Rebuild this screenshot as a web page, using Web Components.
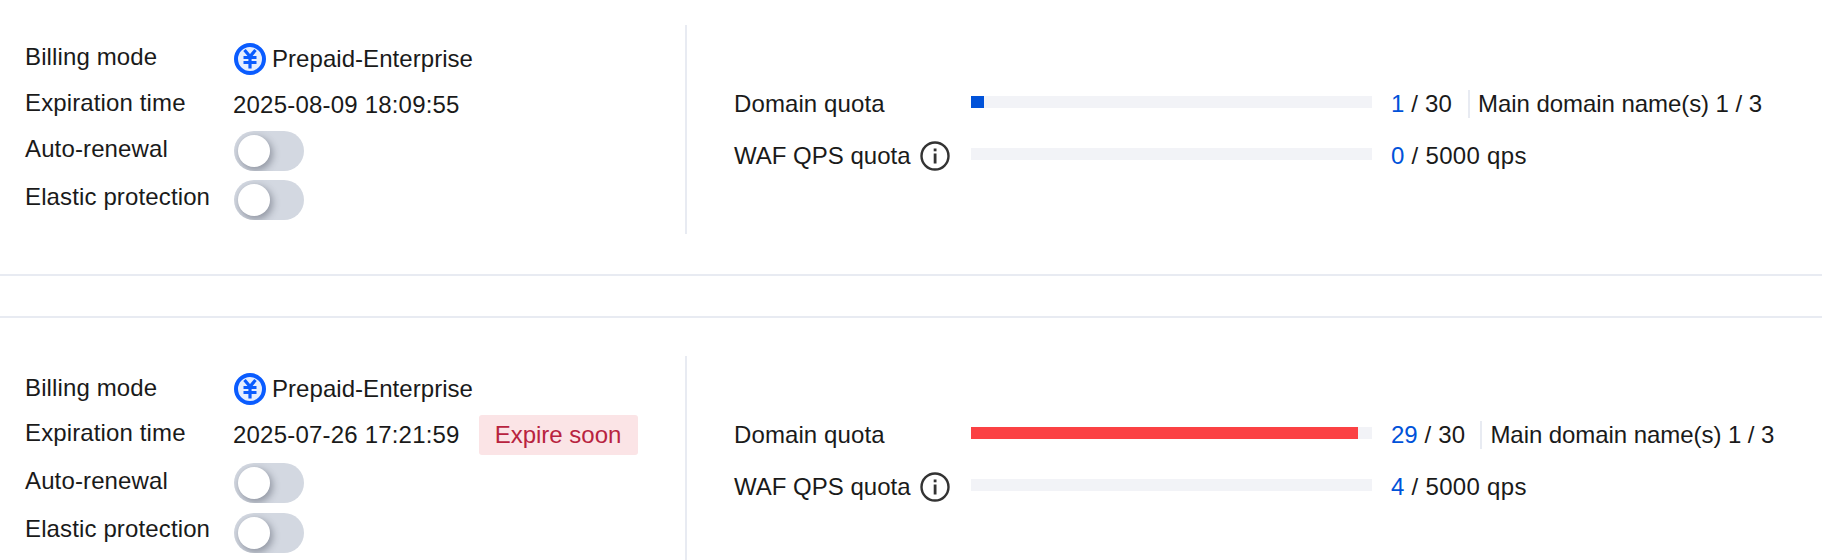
<!DOCTYPE html>
<html><head><meta charset="utf-8"><style>
html,body{margin:0;padding:0;background:#fff}
body{font:24px "Liberation Sans",Arial,sans-serif;color:#1a1a1a;width:1822px;height:560px;overflow:hidden}
billing-card[second]{margin-top:40px}
</style></head><body>
<billing-card date="2025-08-09 18:09:55" used="1" fill="13" wafused="0"></billing-card>
<billing-card second soon date="2025-07-26 17:21:59" used="29" fill="387" color="#fb4144" wafused="4"></billing-card>
<script>
class YenIcon extends HTMLElement{constructor(){super();this.attachShadow({mode:'open'}).innerHTML=`<style>:host{display:inline-flex;width:32px;height:32px;flex:none}svg{display:block}</style>
<svg width="32" height="32" viewBox="0 0 32 32"><circle cx="16" cy="16" r="14" fill="#e5eeff" stroke="#0a5cff" stroke-width="4"/>
<path d="M10.5 7 16 13.5 21.5 7M9.5 14.5H22.5M9.5 19.5H22.5M16 13.5V25.5" fill="none" stroke="#0a5cff" stroke-width="3.2"/></svg>`}}
customElements.define('yen-icon',YenIcon);
class InfoIcon extends HTMLElement{constructor(){super();this.attachShadow({mode:'open'}).innerHTML=`<style>:host{display:inline-flex;width:30px;height:30px;flex:none}svg{display:block}</style>
<svg width="30" height="30" viewBox="0 0 30 30"><circle cx="15" cy="15" r="13.5" fill="none" stroke="#333" stroke-width="2.4"/><rect x="13.7" y="7.5" width="2.8" height="2.8" fill="#333"/><rect x="13.7" y="12.5" width="2.8" height="10" fill="#333"/></svg>`}}
customElements.define('info-icon',InfoIcon);
class ToggleSwitch extends HTMLElement{constructor(){super();this.attachShadow({mode:'open'}).innerHTML=`<style>:host{display:block;width:70px;height:40px;border-radius:20px;background:#d3d8e1;overflow:hidden;padding:4px;box-sizing:border-box}
.k{width:32px;height:32px;border-radius:50%;background:#fff;box-shadow:2px 3px 7px 1px rgba(50,55,70,.38)}</style><div class="k"></div>`}}
customElements.define('toggle-switch',ToggleSwitch);
class InfoRow extends HTMLElement{constructor(){super();this.attachShadow({mode:'open'}).innerHTML=`<style>:host{display:flex;align-items:center;margin-top:var(--mt,0)}
.l{width:208px;flex:none;padding-bottom:var(--lift,4px);letter-spacing:.13px;white-space:nowrap;margin-left:-1px;margin-right:1px}
.v{display:flex;align-items:center;white-space:nowrap}</style><div class="l"><slot name="label"></slot></div><div class="v"><slot></slot></div>`}}
customElements.define('info-row',InfoRow);
class ExpireBadge extends HTMLElement{constructor(){super();this.attachShadow({mode:'open'}).innerHTML=`<style>:host{display:block;height:40px;line-height:40px;padding:0 17px 0 16px;background:#fbe4e6;color:#b8233f;border-radius:3px;margin-left:19px;white-space:nowrap}</style><slot></slot>`}}
customElements.define('expire-badge',ExpireBadge);
class QuotaRow extends HTMLElement{constructor(){super();this.attachShadow({mode:'open'}).innerHTML=`<style>:host{display:grid;grid-template-columns:237px 401px auto;align-items:center;margin-top:var(--mt,0);height:var(--h)}
.l{display:flex;align-items:center;white-space:nowrap;letter-spacing:var(--lls,.1px);padding-top:3px;margin-bottom:-1px}
.t{height:12px;background:#f2f3f7}.f{height:12px;width:var(--w,0);background:var(--c,#0052d9)}
.v{padding-left:19px;display:flex;align-items:center;white-space:pre;letter-spacing:var(--ls,0);padding-top:3px;margin-bottom:-1px}
</style><div class="l"><slot name="label"></slot></div><div class="t"><div class="f"></div></div><div class="v"><slot></slot></div>`}}
customElements.define('quota-row',QuotaRow);
class BillingCard extends HTMLElement{constructor(){super();this.attachShadow({mode:'open'})}
connectedCallback(){const a=n=>this.getAttribute(n);const soon=this.hasAttribute('soon');const sec=this.hasAttribute('second');
this.shadowRoot.innerHTML=`<style>:host{display:flex;box-sizing:border-box;height:${sec?244:276}px;${sec?'border-top:2px solid #e8ebf2;padding-top:38px':'border-bottom:2px solid #e8ebf2;padding-top:25px'}}
.left{width:687px;box-sizing:border-box;height:${sec?'auto':'209px'};border-right:2px solid #e8ebf2;padding:${sec?17:18}px 0 0 26px}
.right{flex:1;padding:62px 0 0 47px;height:209px;box-sizing:border-box;display:flex;flex-direction:column}
.b{color:#0052d9}.g{margin-left:6px;letter-spacing:.05px}
.dt{letter-spacing:.2px;margin-left:-1px}
.d{width:2px;height:28px;background:#e8ebf2;margin:0 8px 0 ${sec?15:16}px}
.m{letter-spacing:-.06px}.u{letter-spacing:.2px}
</style><div class="left">
<info-row style="--lift:${sec?2:4}px"><span slot="label">Billing mode</span><yen-icon></yen-icon><span class="g">Prepaid-Enterprise</span></info-row>
<info-row style="--mt:10px;height:40px"><span slot="label">Expiration time</span><span class="dt">${a('date')}</span>${soon?'<expire-badge>Expire soon</expire-badge>':''}</info-row>
<info-row style="--mt:${sec?8:6}px;--lift:4px"><span slot="label">Auto-renewal</span><toggle-switch></toggle-switch></info-row>
<info-row style="--mt:${sec?10:9}px;--lift:${sec?8:6}px"><span slot="label">Elastic protection</span><toggle-switch></toggle-switch></info-row>
</div><div class="right">
<quota-row style="--h:30px;--w:${a('fill')}px;--c:${a('color')||'#0052d9'}"><span slot="label">Domain quota</span><span class="b">${a('used')}</span><span class="u"> / 30</span><span class="d"></span><span class="m">Main domain name(s) 1 / 3</span></quota-row>
<quota-row style="--h:32px;--mt:21px;--ls:.3px;--lls:0"><span slot="label" style="display:flex;align-items:center">WAF QPS quota<info-icon style="margin-left:9px"></info-icon></span><span class="b">${a('wafused')}</span><span> / 5000 qps</span></quota-row>
</div>`}}
customElements.define('billing-card',BillingCard);
</script></body></html>
